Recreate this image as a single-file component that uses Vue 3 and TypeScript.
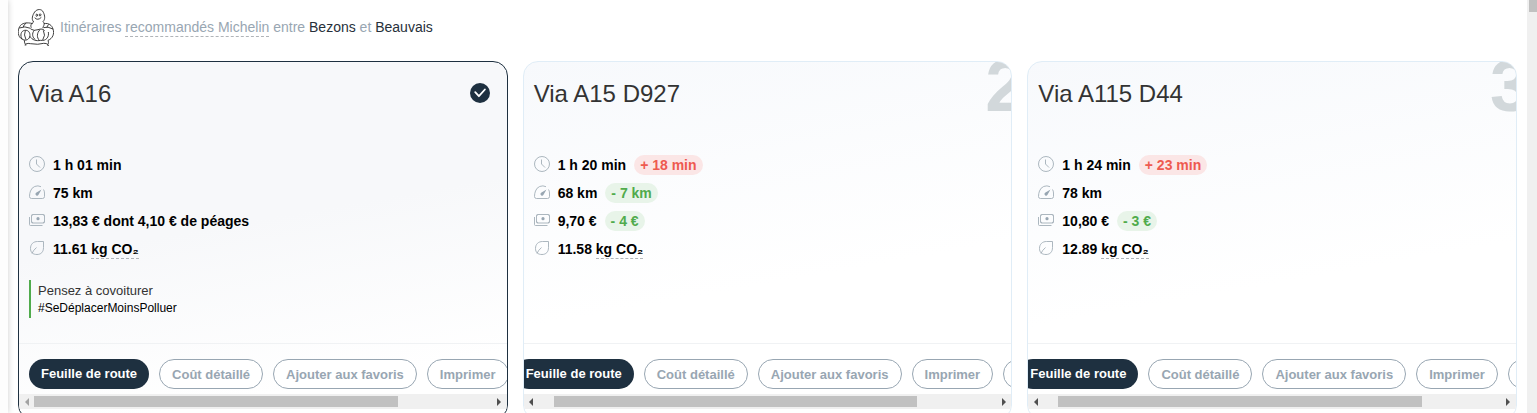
<script setup lang="ts">
import { onMounted, ref } from 'vue'

interface Metric {
  icon: 'clock' | 'gauge' | 'money' | 'leaf'
  value: string
  unit?: string
  diff?: string
  worse?: boolean
}

interface Route {
  rank: number
  title: string
  selected: boolean
  scroll: number
  metrics: Metric[]
}

const routes: Route[] = [
  {
    rank: 1,
    title: 'Via A16',
    selected: true,
    scroll: 0,
    metrics: [
      { icon: 'clock', value: '1 h 01 min' },
      { icon: 'gauge', value: '75 km' },
      { icon: 'money', value: '13,83 € dont 4,10 € de péages' },
      { icon: 'leaf', value: '11.61', unit: 'kg CO₂' },
    ],
  },
  {
    rank: 2,
    title: 'Via A15 D927',
    selected: false,
    scroll: 20,
    metrics: [
      { icon: 'clock', value: '1 h 20 min', diff: '+ 18 min', worse: true },
      { icon: 'gauge', value: '68 km', diff: '- 7 km' },
      { icon: 'money', value: '9,70 €', diff: '- 4 €' },
      { icon: 'leaf', value: '11.58', unit: 'kg CO₂' },
    ],
  },
  {
    rank: 3,
    title: 'Via A115 D44',
    selected: false,
    scroll: 20,
    metrics: [
      { icon: 'clock', value: '1 h 24 min', diff: '+ 23 min', worse: true },
      { icon: 'gauge', value: '78 km' },
      { icon: 'money', value: '10,80 €', diff: '- 3 €' },
      { icon: 'leaf', value: '12.89', unit: 'kg CO₂' },
    ],
  },
]

const strips = ref<HTMLElement[]>([])
const thumbs = ref(routes.map(() => ({ left: '0%', width: '100%' })))

function syncThumb(index: number) {
  const strip = strips.value[index]
  if (!strip) return
  thumbs.value[index] = {
    left: `${(strip.scrollLeft / strip.scrollWidth) * 100}%`,
    width: `${(strip.clientWidth / strip.scrollWidth) * 100}%`,
  }
}

function scrollStrip(index: number, delta: number) {
  strips.value[index]?.scrollBy({ left: delta })
}

onMounted(() => {
  routes.forEach((route, index) => {
    const strip = strips.value[index]
    if (strip) strip.scrollLeft = route.scroll
    syncThumb(index)
  })
})
</script>

<template>
  <div class="page">
    <div class="rail"></div>
    <main class="content">
      <header class="intro">
        <svg class="mascot" viewBox="0 0 108 111" aria-hidden="true">
          <path d="M40 56C36 48 41 43 47 39C39 30 44 18 50 9C57-1 72-1 76 10C81 20 82 31 75 38C81 43 78 50 74 56" />
          <path d="M54 17q3-4 5 0q0 5-3 5q-3-1-2-5M64 16q4-3 5 1q-1 5-4 4q-2-2-1-5M50 26q9 10 20-1" />
          <path d="M44 44C28 39 10 42 5 53C-2 64-1 84 12 90" />
          <path d="M4 57q16-7 34 1M25 42q-9 6-9 12" />
          <path d="M78 44C92 41 102 49 105 60C110 74 104 89 90 94" />
          <path d="M76 56q13-5 29 4M92 46q-5 6-5 10" />
          <path d="M12 90C6 80 8 66 20 64C33 62 38 74 35 84C31 94 20 96 12 90M22 65q-6 12 2 27" />
          <path d="M36 82C42 93 55 97 68 94C84 97 94 84 91 69M38 60q10 7 22 2q14-5 20 3M49 64C40 74 44 86 52 92M66 62C56 72 56 86 64 94M76 64q8 15-2 29" />
          <path d="M19 94q0 9 4 13M23 105q8-3 14-1q24 4 40-1q8-1 13 4M90 94q3 6 0 12M20 108h5M88 109h5" />
        </svg>
        <p class="intro-text">
          Itinéraires <span class="dashed">recommandés Michelin</span> entre
          <span class="city">Bezons</span> et <span class="city">Beauvais</span>
        </p>
      </header>

      <section class="cards">
        <article v-for="(route, index) in routes" :key="route.rank" class="card" :class="{ selected: route.selected }">
          <div class="card-head">
            <h2>{{ route.title }}</h2>
            <svg v-if="route.selected" class="check" viewBox="0 0 20 20" aria-hidden="true">
              <circle cx="10" cy="10" r="10" />
              <path d="M5.2 9.2l3.7 4 6-6.7" />
            </svg>
            <span v-else class="rank">{{ route.rank }}</span>
          </div>

          <ul class="metrics">
            <li v-for="metric in route.metrics" :key="metric.icon">
              <svg class="icon" viewBox="0 0 16 16" aria-hidden="true">
                <template v-if="metric.icon === 'clock'">
                  <circle cx="8" cy="8" r="7.5" />
                  <path d="M7.5 3.5v4.5l3.5 3.5" />
                </template>
                <template v-else-if="metric.icon === 'gauge'">
                  <path d="M12 2.7A7.500 7.500 0 0 0 1.500 7Q.5 9.500.5 12.500q0 2 2 2h11q2 0 2-2V9q0-2-1-3.500" />
                  <path class="solid" d="M12.500 5.500L9.500 10.700a1.600 1.600 0 1 1-2.400-2z" />
                </template>
                <template v-else-if="metric.icon === 'money'">
                  <rect x="2.5" y="2.5" width="13" height="8.5" rx="1" />
                  <path d="M.5 5v7.500q0 1 1 1H13.500M2.500 3.700q1.200 0 1.200-1.200M14.300 2.500q0 1.200 1.200 1.200M2.500 9.800q1.200 0 1.200 1.200M14.300 11q0-1.200 1.200-1.200" />
                  <circle class="solid" cx="9" cy="6.700" r="1.600" />
                </template>
                <template v-else>
                  <path d="M14.500 1.500V7.500c0 4.500-2.500 7-6.500 7-4 0-6.500-2-6.500-6 0-4.500 3-7 7-7zM3 13.500Q4 10.500 7.500 7.500" />
                </template>
              </svg>
              <span>{{ metric.value }} <span v-if="metric.unit" class="dashed">{{ metric.unit }}</span></span>
              <span v-if="metric.diff" class="badge" :class="{ worse: metric.worse }">{{ metric.diff }}</span>
            </li>
          </ul>

          <aside v-if="route.selected" class="tip">
            <p>Pensez à covoiturer</p>
            <p class="tag">#SeDéplacerMoinsPolluer</p>
          </aside>

          <footer class="card-foot">
            <div ref="strips" class="strip" @scroll="syncThumb(index)">
              <div class="strip-inner">
                <button type="button" class="pill primary">Feuille de route</button>
                <button type="button" class="pill">Coût détaillé</button>
                <button type="button" class="pill">Ajouter aux favoris</button>
                <button type="button" class="pill">Imprimer</button>
                <button type="button" class="pill more" aria-label="Partager"></button>
              </div>
            </div>
            <div class="scrollbar">
              <button
                type="button"
                class="arrow left"
                :class="{ off: route.scroll === 0 }"
                aria-label="Défiler vers la gauche"
                @click="scrollStrip(index, -40)"
              ></button>
              <div class="track"><div class="thumb" :style="thumbs[index]"></div></div>
              <button
                type="button"
                class="arrow right"
                aria-label="Défiler vers la droite"
                @click="scrollStrip(index, 40)"
              ></button>
            </div>
          </footer>
        </article>
      </section>
    </main>
    <div class="page-scroll"><div class="page-thumb"></div></div>
  </div>
</template>

<style>
body {
  margin: 0;
  background: #fff;
}
</style>

<style scoped>
.page {
  display: flex;
  height: 100vh;
  overflow: hidden;
  font-family: "Liberation Sans", Arial, sans-serif;
  color: #000;
}

.rail {
  flex: none;
  width: 8px;
  background: #fdfdfd;
  box-shadow: 0 0 6px rgba(0, 0, 0, 0.2);
  clip-path: inset(0 -8px 0 0);
}

.content {
  flex: 1;
  min-width: 0;
  padding: 8px 10px 0;
}

.intro {
  display: flex;
  align-items: center;
  gap: 6px;
  height: 38px;
  margin-bottom: 15px;
}

.mascot {
  width: 36px;
  height: 37px;
  fill: none;
  stroke: #222;
  stroke-width: 2.6;
}

.intro-text {
  margin: 0;
  font-size: 14px;
  line-height: 18px;
  color: #98a6b2;
}

.city {
  color: #27303a;
}

.dashed {
  display: inline-block;
  line-height: 18px;
  border-bottom: 1px dashed #b0b4b8;
}

.cards {
  display: grid;
  grid-template-columns: repeat(3, minmax(0, 1fr));
  gap: 15px;
}

.card {
  position: relative;
  display: flex;
  flex-direction: column;
  min-height: 357px;
  overflow: hidden;
  border: 1px solid #e0edf7;
  border-radius: 15px;
  background: linear-gradient(170deg, #f7f9fc, #fff 60%);
}

.card.selected {
  border-color: #1e3040;
  background: linear-gradient(170deg, #f7f8fa 45%, #fff 85%);
}

.card-head {
  display: flex;
  align-items: center;
  justify-content: space-between;
  height: 64px;
  padding: 0 17px 0 10px;
}

h2 {
  margin: 0;
  font-size: 24px;
  font-weight: 400;
  line-height: 32px;
  color: #333;
}

.check {
  width: 20px;
  height: 20px;
  margin-bottom: 2px;
}

.check circle {
  fill: #1e3040;
}

.check path {
  fill: none;
  stroke: #fff;
  stroke-width: 1.8;
  stroke-linecap: round;
  stroke-linejoin: round;
}

.rank {
  position: absolute;
  top: -16px;
  right: -14px;
  font-size: 72px;
  font-weight: 700;
  line-height: 80px;
  color: #d2d8db;
}

.metrics {
  display: grid;
  gap: 8px;
  margin: 29px 0 0;
  padding: 0 10px;
  list-style: none;
  font-size: 14px;
  font-weight: 700;
  line-height: 20px;
}

.metrics li {
  display: flex;
  align-items: center;
  gap: 8px;
  height: 20px;
}

.icon {
  width: 16px;
  height: 16px;
  margin-bottom: 2px;
  fill: none;
  stroke: #a3afb8;
  stroke-width: 0.9;
}

.solid {
  fill: #98a6b2;
  stroke: none;
}

.badge {
  padding: 0 6px;
  border-radius: 10px;
  background: #e8f4e9;
  color: #50ab4c;
}

.badge.worse {
  background: #fbe6e6;
  color: #ee5a50;
}

.tip {
  margin: 21px 10px 0;
  padding: 2px 7px;
  border-left: 2px solid #50ab4c;
  font-size: 13px;
  line-height: 18px;
  color: #333;
}

.tip p {
  margin: 0;
}

.tip .tag {
  font-size: 12px;
  line-height: 16px;
  color: #000;
}

.card-foot {
  margin-top: auto;
  margin-bottom: 10px;
  border-top: 1px solid #f0f2f4;
}

.strip {
  overflow-x: auto;
  scrollbar-width: none;
}

.strip-inner {
  display: flex;
  gap: 10px;
  width: max-content;
  padding: 15px 10px 5px;
}

.pill {
  height: 30px;
  box-sizing: border-box;
  padding: 1px 12px 0;
  border: 1px solid #98a6b2;
  border-radius: 15px;
  background: #fff;
  font: 700 13px/28px "Liberation Sans", Arial, sans-serif;
  color: #98a6b2;
  white-space: nowrap;
}

.pill.primary {
  padding-top: 0;
  border: 0;
  background: #1e3040;
  color: #fff;
}

.pill.more {
  width: 104px;
}

.scrollbar {
  display: flex;
  height: 15px;
  background: #f0f0f0;
}

.track {
  position: relative;
  flex: 1;
}

.thumb {
  position: absolute;
  top: 2px;
  bottom: 2px;
  background: #c1c1c1;
}

.arrow {
  display: flex;
  align-items: center;
  justify-content: center;
  width: 15px;
  padding: 0;
  border: 0;
  background: none;
}

.arrow::before {
  content: "";
  border: 4px solid transparent;
}

.left::before {
  border-left: 0;
  border-right-color: #505050;
}

.left.off::before {
  border-right-color: #a3a3a3;
}

.right::before {
  border-right: 0;
  border-left-color: #505050;
}

.page-scroll {
  flex: none;
  box-sizing: border-box;
  width: 10px;
  padding-left: 2px;
  background: #f0f0f0;
}

.page-thumb {
  height: 12px;
  background: #c1c1c1;
}
</style>
